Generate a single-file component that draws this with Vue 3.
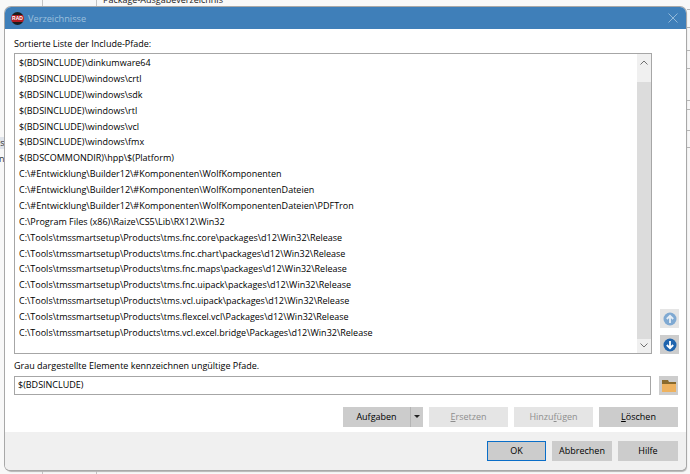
<script setup>
const paths = [
  '$(BDSINCLUDE)\\dinkumware64',
  '$(BDSINCLUDE)\\windows\\crtl',
  '$(BDSINCLUDE)\\windows\\sdk',
  '$(BDSINCLUDE)\\windows\\rtl',
  '$(BDSINCLUDE)\\windows\\vcl',
  '$(BDSINCLUDE)\\windows\\fmx',
  '$(BDSCOMMONDIR)\\hpp\\$(Platform)',
  'C:\\#Entwicklung\\Builder12\\#Komponenten\\WolfKomponenten',
  'C:\\#Entwicklung\\Builder12\\#Komponenten\\WolfKomponentenDateien',
  'C:\\#Entwicklung\\Builder12\\#Komponenten\\WolfKomponentenDateien\\PDFTron',
  'C:\\Program Files (x86)\\Raize\\CS5\\Lib\\RX12\\Win32',
  'C:\\Tools\\tmssmartsetup\\Products\\tms.fnc.core\\packages\\d12\\Win32\\Release',
  'C:\\Tools\\tmssmartsetup\\Products\\tms.fnc.chart\\packages\\d12\\Win32\\Release',
  'C:\\Tools\\tmssmartsetup\\Products\\tms.fnc.maps\\packages\\d12\\Win32\\Release',
  'C:\\Tools\\tmssmartsetup\\Products\\tms.fnc.uipack\\packages\\d12\\Win32\\Release',
  'C:\\Tools\\tmssmartsetup\\Products\\tms.vcl.uipack\\packages\\d12\\Win32\\Release',
  'C:\\Tools\\tmssmartsetup\\Products\\tms.flexcel.vcl\\Packages\\d12\\Win32\\Release',
  'C:\\Tools\\tmssmartsetup\\Products\\tms.vcl.excel.bridge\\Packages\\d12\\Win32\\Release'
]
const ticks = [9, 27, 50, 68, 100, 109, 130, 147]
</script>

<template>
  <div class="desktop">
    <div class="behind">Package-Ausgabeverzeichnis</div>
    <div class="vline v1"></div>
    <div class="vline v2"></div>
    <div class="scrap s1">is</div>
    <div class="scrap s2">n</div>
    <div v-for="t in ticks" :key="t" class="tick" :style="{ top: t + 'px' }"></div>
    <div class="dialog">
      <header class="titlebar">
        <span class="logo">RAD</span>
        <span class="title">Verzeichnisse</span>
        <svg class="close" viewBox="0 0 10 10" width="10" height="10">
          <path d="M0.5 0.5 9.5 9.5M9.5 0.5 0.5 9.5" stroke="#9dc0dd" stroke-width="0.9" fill="none" />
        </svg>
      </header>
      <main class="body">
        <div class="label">Sortierte Liste der Include-Pfade:</div>
        <div class="list-row">
          <div class="list">
            <div class="items">
              <div v-for="p in paths" :key="p" class="item">{{ p }}</div>
            </div>
            <div class="scroll">
              <div class="cap top">
                <svg class="chev" viewBox="0 0 8 5" width="8" height="5"><path d="M0.5 4.500 4 1l3.500 3.500" fill="none" stroke="#707070" /></svg>
              </div>
              <div class="thumb"></div>
              <div class="cap bottom">
                <svg class="chev" viewBox="0 0 8 5" width="8" height="5"><path d="M0.5 0.500 4 4l3.500-3.500" fill="none" stroke="#707070" /></svg>
              </div>
            </div>
          </div>
          <div class="arrows">
            <button class="icon-btn disabled">
              <svg viewBox="0 0 14 14" width="14" height="14"><circle cx="7" cy="7" r="6.5" fill="#7fa9d2" /><path d="M7 11V4M3.8 7 7 3.8 10.200 7" fill="none" stroke="#e6eef6" stroke-width="1.800" /></svg>
            </button>
            <button class="icon-btn">
              <svg viewBox="0 0 14 14" width="14" height="14"><circle cx="7" cy="7" r="6.500" fill="#1f64ae" /><path d="M7 3v7M3.800 7 7 10.200 10.200 7" fill="none" stroke="#fff" stroke-width="1.800" /></svg>
            </button>
          </div>
        </div>
        <div class="hint">Grau dargestellte Elemente kennzeichnen ungültige Pfade.</div>
        <div class="edit-row">
          <div class="edit">$(BDSINCLUDE)</div>
          <button class="icon-btn">
            <svg viewBox="0 0 16 14" width="16" height="14"><path d="M1 1h6l1 2h7v2H1z" fill="#8a6a2c" /><path d="M1 5h14v8H1z" fill="#eeb25f" /></svg>
          </button>
        </div>
        <div class="actions">
          <div class="split">
            <span class="split-main">Aufgaben</span>
            <span class="split-arrow"></span>
          </div>
          <button class="btn off"><u>E</u>rsetzen</button>
          <button class="btn off">Hinzu<u>f</u>ügen</button>
          <button class="btn"><u>L</u>öschen</button>
        </div>
      </main>
      <footer class="footer">
        <button class="btn ok">OK</button>
        <button class="btn">Abbrechen</button>
        <button class="btn">Hilfe</button>
      </footer>
    </div>
  </div>
</template>

<style scoped>
.desktop {
  position: relative;
  width: 690px;
  height: 474px;
  overflow: hidden;
  background: #f8f8f8;
  font-family: "Open Sans", "Noto Sans", sans-serif;
  font-size: 9px;
  color: #000;
}
.behind {
  position: absolute;
  left: 103px;
  top: -7px;
  color: #222;
}
.vline {
  position: absolute;
  top: 0;
  width: 1px;
  height: 474px;
  background: #c4c4c4;
}
.v1 { left: 42px; }
.v2 { left: 96px; }
.scrap {
  position: absolute;
  left: -2px;
  line-height: 12px;
  color: #333;
}
.s1 { top: 137px; background: #dfe3ea; padding-right: 1px; }
.s2 { top: 153px; left: -1px; }
.tick {
  position: absolute;
  left: 687px;
  width: 3px;
  height: 1px;
  background: #b5b5b5;
}
.dialog {
  position: absolute;
  left: 5px;
  top: 7px;
  width: 681px;
  height: 463px;
  display: flex;
  flex-direction: column;
  background: #fff;
  border-radius: 6px 6px 5px 5px;
  overflow: hidden;
  box-shadow: 0 0 0 1px #a8a8a8, 1px 2px 1px #b5b5b5;
}
.titlebar {
  height: 22px;
  flex: none;
  display: flex;
  align-items: center;
  background: #3f7fb9;
  padding: 0 8px 0 6px;
}
.logo {
  width: 13px;
  height: 13px;
  border-radius: 50%;
  background: linear-gradient(#1c1c1c 0 22%, #b01c24 22% 78%, #1c1c1c 78%);
  color: #fff;
  font: bold 5px/13px "Liberation Sans", sans-serif;
  text-align: center;
}
.title {
  margin-left: 4px;
  color: #9dc0dd;
  font-size: 9.200px;
  flex: 1;
}
.body {
  flex: 1;
  display: flex;
  flex-direction: column;
  padding: 6px 8px 0 9px;
}
.label {
  height: 18px;
  line-height: 17px;
}
.list-row {
  display: flex;
  gap: 8px;
  height: 301px;
}
.list {
  width: 638px;
  flex: none;
  box-sizing: border-box;
  border: 1px solid #a6a6a6;
  display: flex;
}
.items {
  flex: 1;
  padding: 1px 0 0 4px;
}
.item {
  height: 15.880px;
  line-height: 15.880px;
  white-space: nowrap;
}
.scroll {
  width: 14px;
  background: #f0f0f0;
  display: flex;
  flex-direction: column;
  align-items: stretch;
}
.cap {
  flex: none;
  display: flex;
  justify-content: center;
}
.cap.top {
  height: 28px;
  padding-top: 6px;
  box-sizing: border-box;
}
.cap.bottom {
  height: 14px;
  padding-top: 4px;
  box-sizing: border-box;
}
.thumb {
  flex: 1;
  background: #dcdcdc;
}
.chev {
  flex: none;
}
.arrows {
  width: 19px;
  display: flex;
  flex-direction: column;
  justify-content: flex-end;
  gap: 7px;
}
.icon-btn {
  width: 19px;
  height: 19px;
  padding: 0;
  border: 0;
  background: #cdcdcd;
  display: flex;
  align-items: center;
  justify-content: center;
  flex: none;
}
.icon-btn.disabled {
  background: #e5e5e5;
}
.hint {
  height: 22px;
  line-height: 23px;
}
.edit-row {
  display: flex;
  gap: 8px;
}
.edit {
  width: 638px;
  height: 19px;
  box-sizing: border-box;
  border: 1px solid #a6a6a6;
  padding-left: 3px;
  line-height: 16px;
}
.actions {
  display: flex;
  justify-content: flex-end;
  gap: 6px;
  margin-top: 12px;
}
.btn {
  width: 79px;
  height: 20px;
  padding: 0;
  border: 0;
  background: #cccccc;
  color: #000;
  font: inherit;
  line-height: 20px;
}
.btn.off {
  background: #e5e5e5;
  color: #8e8e8e;
}
.split {
  width: 80px;
  height: 20px;
  display: flex;
  background: #cccccc;
  line-height: 20px;
}
.split-main {
  flex: 1;
  text-align: center;
  border-right: 1px solid #b4b4b4;
}
.split-arrow {
  width: 12px;
  position: relative;
}
.split-arrow::after {
  content: "";
  position: absolute;
  left: 3px;
  top: 8px;
  border: 3px solid transparent;
  border-top: 3px solid #222;
  border-bottom: 0;
}
.footer {
  margin-top: auto;
  height: 38px;
  flex: none;
  box-sizing: border-box;
  background: #f0f0f0;
  display: flex;
  justify-content: flex-end;
  gap: 6px;
  padding: 9px 8px 0 0;
}
.footer .btn {
  width: 60px;
}
.footer .ok {
  width: 59px;
  box-sizing: border-box;
  border: 1px solid #0a6ec8;
  line-height: 18px;
}
</style>
